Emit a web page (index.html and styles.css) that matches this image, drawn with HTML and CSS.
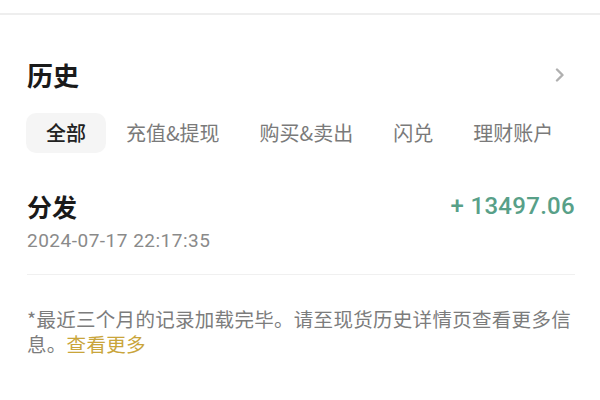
FILE: index.html
```html
<!DOCTYPE html>
<html lang="zh-CN">
<head>
<meta charset="utf-8">
<link rel="stylesheet" href="styles.css">
</head>
<body>
<div class="topbar"></div>
<div class="content">
  <div class="title-row">
    <h1 class="title">历史</h1>
    <svg class="chevron" width="10" height="14" viewBox="0 0 10 14"><path d="M2 1.5 L7.5 7 L2 12.5" fill="none" stroke="#b0b0b0" stroke-width="2.4" stroke-linecap="round" stroke-linejoin="round"/></svg>
  </div>
  <div class="tabs">
    <div class="tab active">全部</div>
    <div class="tab">充值&amp;提现</div>
    <div class="tab">购买&amp;卖出</div>
    <div class="tab">闪兑</div>
    <div class="tab">理财账户</div>
  </div>
  <div class="record">
    <div class="record-row">
      <div class="record-name">分发</div>
      <div class="record-amount">+ 13497.06</div>
    </div>
    <div class="record-date">2024-07-17 22:17:35</div>
  </div>
  <div class="divider"></div>
  <p class="note">*最近三个月的记录加载完毕。请至现货历史详情页查看更多信息。<span class="link">查看更多</span></p>
</div>
</body>
</html>
```
FILE: styles.css
```css
body {
  margin: 0;
  background: #ffffff;
  font-family: "Noto Sans CJK SC", "Noto Sans", sans-serif;
}
.topbar {
  height: 13px;
  border-bottom: 2px solid #eeeeee;
}
.content {
  padding: 0 25px 0 27px;
}
.title-row {
  display: flex;
  justify-content: space-between;
  align-items: center;
  height: 36px;
  margin-top: 42px;
}
.title {
  margin: 0;
  font-size: 26px;
  line-height: 36px;
  font-weight: 700;
  color: #1a1a1a;
}
.chevron {
  margin-right: 10px;
}
.tabs {
  display: flex;
  margin-top: 20px;
  margin-left: -1px;
}
.tab {
  height: 40px;
  line-height: 40px;
  padding: 0 20px;
  font-size: 20px;
  color: #7a7a7a;
  border-radius: 10px;
}
.tab.active {
  background: #f5f5f5;
  color: #222222;
  font-weight: 500;
}
.record {
  margin-top: 36px;
}
.record-row {
  display: flex;
  justify-content: space-between;
  align-items: center;
  height: 34px;
}
.record-name {
  font-size: 25px;
  line-height: 34px;
  font-weight: 700;
  color: #1a1a1a;
}
.record-amount {
  font-family: Roboto, "Liberation Sans", sans-serif;
  font-size: 24px;
  font-weight: 500;
  color: #58a088;
  letter-spacing: 0.3px;
}
.record-date {
  margin-top: 6px;
  font-family: Roboto, "Liberation Sans", sans-serif;
  font-size: 19px;
  line-height: 24px;
  letter-spacing: 0.5px;
  color: #8a8a8a;
}
.divider {
  margin-top: 21px;
  height: 1px;
  background: #f0f0f0;
}
.note {
  margin: 0;
  padding-top: 31px;
  font-size: 19.5px;
  line-height: 25px;
  letter-spacing: 0.3px;
  color: #7c7c7c;
}
.link {
  color: #c9a53a;
}
```
